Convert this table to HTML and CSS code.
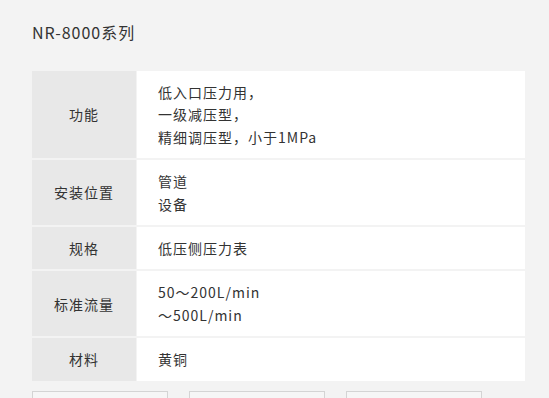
FILE: index.html
```html
<!DOCTYPE html>
<html lang="zh-CN">
<head>
<meta charset="utf-8">
<title>NR-8000系列</title>
<link rel="stylesheet" href="styles.css">
</head>
<body>
<main class="page">
  <h1 class="title">NR-8000系列</h1>
  <div class="spec">
    <div class="label">功能</div>
    <div class="value">低入口压力用，<br>一级减压型，<br>精细调压型，小于1MPa</div>
    <div class="label">安装位置</div>
    <div class="value">管道<br>设备</div>
    <div class="label">规格</div>
    <div class="value">低压侧压力表</div>
    <div class="label">标准流量</div>
    <div class="value">50～200L/min<br>～500L/min</div>
    <div class="label">材料</div>
    <div class="value">黄铜</div>
  </div>
  <div class="links">
    <a class="link-box" href="#"></a>
    <a class="link-box" href="#"></a>
    <a class="link-box" href="#"></a>
  </div>
</main>
</body>
</html>
```
FILE: styles.css
```css
html, body {
  margin: 0;
  padding: 0;
  background: #f3f3f3;
}

body {
  font-family: "Noto Sans CJK SC", "Noto Sans", sans-serif;
  color: #333;
}

.page {
  padding: 20px 24px 0 32px;
}

.title {
  margin: 0;
  font-size: 16px;
  font-weight: normal;
  letter-spacing: 1px;
  line-height: 24px;
  height: 24px;
}

.spec {
  margin-top: 27px;
  width: 493px;
  display: grid;
  grid-template-columns: 104px 1fr;
  column-gap: 1px;
  row-gap: 2px;
  font-size: 14px;
  letter-spacing: 1px;
  line-height: 22.4px;
}

.label {
  background: #e8e8e8;
  display: flex;
  align-items: center;
  justify-content: center;
  padding: 10px 0;
}

.value {
  background: #fff;
  padding: 10px 0 10px 21px;
}

.links {
  margin-top: 10px;
  display: flex;
  gap: 21px;
}

.link-box {
  display: block;
  width: 134px;
  height: 40px;
  border: 1px solid #d4d4d4;
  background: #f6f6f6;
}
```
